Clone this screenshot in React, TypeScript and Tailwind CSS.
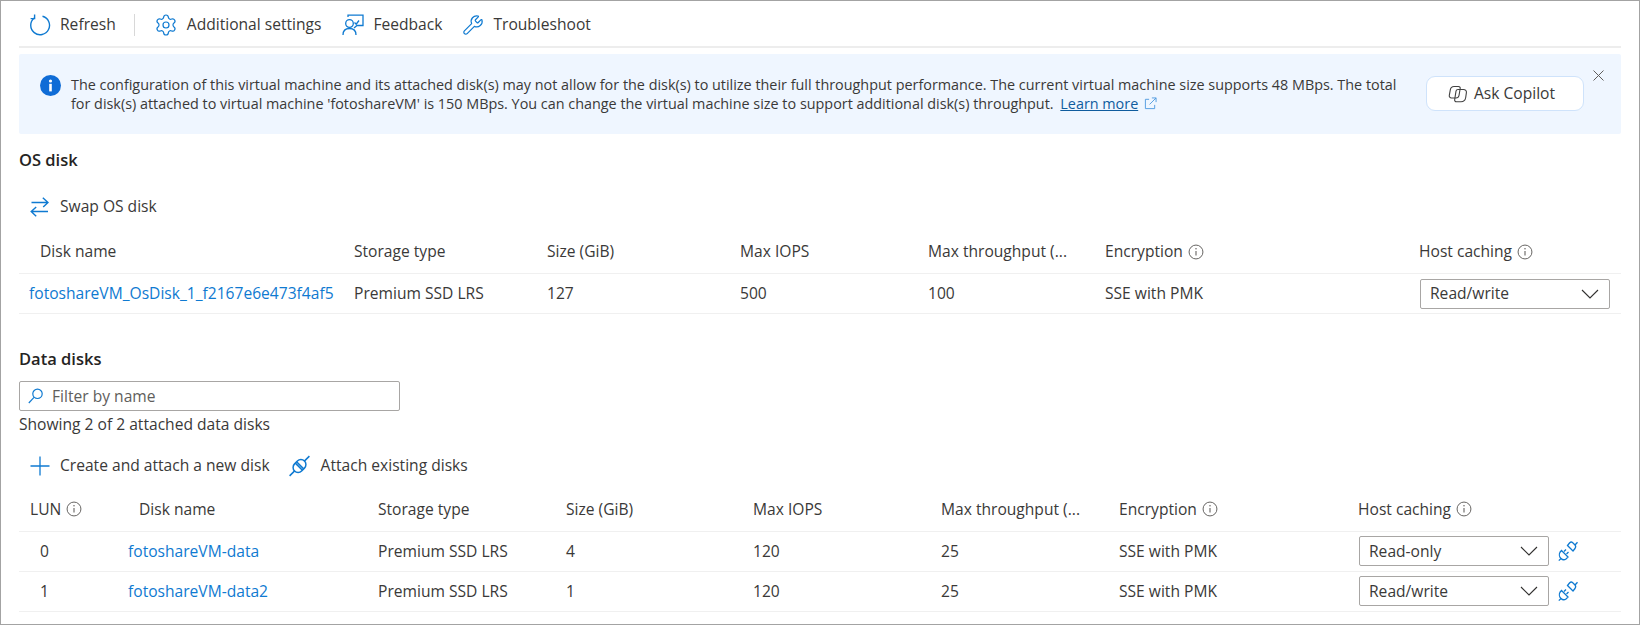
import React from 'react';
import { Settings, Wrench } from 'lucide-react';

const Info = () => (
  <svg width="16" height="16" viewBox="0 0 15 15" fill="none" stroke="#605e5c" className="shrink-0">
    <circle cx="7.5" cy="7.5" r="6.5" strokeWidth="0.9" />
    <path d="M7.5 6.6v4.2" strokeWidth="1" />
    <circle cx="7.5" cy="4.5" r="0.7" fill="#605e5c" stroke="none" />
  </svg>
);

const RefreshIcon = () => (
  <svg width="22" height="22" viewBox="0 0 22 22" fill="none" stroke="#0f7ad1" strokeWidth="1.4">
    <path d="M13.5 2.2A9.4 9.4 0 1 1 5.2 4" />
    <path d="M5.6 0.6V4.6H1.6" />
  </svg>
);

const FeedbackIcon = () => (
  <svg width="22" height="22" viewBox="0 0 22 22" fill="none" stroke="#0f7ad1" strokeWidth="1.3">
    <path d="M6 3V1.2H21V11.5H15L12 14" />
    <path d="M12.5 8.5L14.2 10.2L17 6.5" />
    <circle cx="7.5" cy="9.5" r="3.8" />
    <path d="M1 21C1 16.5 3.5 14.5 7.5 14.5S14 16.5 14 21" />
  </svg>
);

const SwapIcon = () => (
  <svg width="19" height="20" viewBox="0 0 19 20" fill="none" stroke="#0f7ad1" strokeWidth="1.4">
    <path d="M1.5 5.5H18M12.8 0.7L18 5.5L13.2 10" />
    <path d="M18 14.5H1.5M6.2 10L1.2 14.5L6.2 19.3" />
  </svg>
);

const PlusIcon = () => (
  <svg width="20" height="20" viewBox="0 0 20 20" fill="none" stroke="#0f7ad1" strokeWidth="1.3">
    <path d="M10 0.5V19.5M0.5 10H19.5" />
  </svg>
);

const PlugIcon = () => (
  <svg width="21" height="22" viewBox="0 0 21 22" fill="none" stroke="#0f7ad1" strokeWidth="1.5">
    <g transform="rotate(-45 10.5 11)">
      <path d="M-3.5 11H4M17 11H24.5" />
      <rect x="3.5" y="6" width="14" height="10" rx="5" />
      <path d="M9.6 6V16M11.4 6V16" />
    </g>
  </svg>
);

const DetachIcon = () => (
  <svg width="20" height="22" viewBox="0 0 20 22" fill="none" stroke="#0f7ad1" strokeWidth="1.3">
    <path d="M0.8 20.6L3 18.5" />
    <path d="M3.5 10.5L10 17L8 19C6.5 20 4.5 20 3 18.5C1.2 17 1 14 2 12.2Z" />
    <path d="M6 11.5L8 9.5M8.5 14L10.5 12" />
    <path d="M9.5 5.5L15 11L17 8.5C18 7 18 6 17 5L14.5 2.5C13.5 1.7 12.5 2 11.5 3Z" />
    <path d="M17 5L19.5 2.2" />
  </svg>
);

const ExternalIcon = () => (
  <svg width="13" height="13" viewBox="0 0 14 14" fill="none" stroke="#4f9be0" strokeWidth="1" className="ml-[6px] inline-block align-[-1px]">
    <path d="M5.5 2.5H1.5V12.5H11.5V8.5" />
    <path d="M6 8L13 1M8.5 1H13V5.5" />
  </svg>
);

const CopilotIcon = () => (
  <svg width="20" height="18" viewBox="0 0 20 18" fill="none" stroke="#424242" strokeWidth="1.1" className="shrink-0">
    <path d="M6 1.5H10.5C11.7 1.5 12.4 2.4 12.2 3.5L11 10.5C10.7 12 9.5 13 8 13H3.5C2 13 1 11.8 1.3 10.3L2.3 4.8C2.7 2.8 4 1.5 6 1.5Z" />
    <path d="M10 4.5H15.5C17.3 4.5 18.7 5.8 18.4 7.6L17.7 12.5C17.3 15 15.6 16.8 13 16.8H8.5C7.2 16.8 6.4 15.8 6.7 14.5L8 6.2C8.2 5.2 9 4.5 10 4.5Z" />
  </svg>
);

const Chevron = () => (
  <svg width="18" height="10" viewBox="0 0 18 10" fill="none" stroke="#323130" strokeWidth="1.1">
    <path d="M1 1L9 9L17 1" />
  </svg>
);

const Select = ({ value }: { value: string }) => (
  <div className="ml-[1px] flex h-[30px] w-[190px] items-center justify-between rounded-[2px] border border-[#a8a6a4] pl-[9px] pr-[10px]">
    <span>{value}</span>
    <Chevron />
  </div>
);

const ToolButton = ({ icon, label, className }: { icon: React.ReactNode; label: string; className?: string }) => (
  <div className={`flex items-center gap-[9px] ${className ?? ''}`}>
    {icon}
    <span>{label}</span>
  </div>
);

const osColumns = 'grid grid-cols-[335px_193px_193px_188px_177px_314px_201px] items-center';
const dataColumns = 'grid grid-cols-[109px_250px_188px_187px_188px_178px_239px_262px] items-center';

const dataDisks = [
  { lun: '0', name: 'fotoshareVM-data', size: '4', caching: 'Read-only' },
  { lun: '1', name: 'fotoshareVM-data2', size: '1', caching: 'Read/write' },
];

export default function App() {
  return (
    <div className="h-[625px] w-[1640px] overflow-hidden border border-[#a3a3a3] bg-white px-[18px] font-['Open_Sans',sans-serif] text-[15.6px] text-[#3a3938]">
      <div className="flex h-[47px] items-center border-b-2 border-[#ededed] pl-[10px] pt-[3px]">
        <ToolButton icon={<RefreshIcon />} label="Refresh" />
        <div className="ml-[18px] mr-[19px] h-[22px] w-[1px] bg-[#d8d8d8]" />
        <ToolButton icon={<Settings size={24} strokeWidth={1.2} color="#0f7ad1" />} label="Additional settings" />
        <ToolButton className="ml-[21px]" icon={<FeedbackIcon />} label="Feedback" />
        <ToolButton className="ml-[20px] gap-[8px]" icon={<Wrench size={22} strokeWidth={1.3} color="#0f7ad1" />} label="Troubleshoot" />
      </div>

      <div className="relative mt-[6px] flex h-[80px] rounded-[2px] bg-[#eff6ff] pl-[21px] pr-[35px] pt-[21px]">
        <svg width="21" height="21" viewBox="0 0 21 21" className="shrink-0">
          <circle cx="10.5" cy="10.5" r="10.5" fill="#0f6cd6" />
          <rect x="9.2" y="8.8" width="2.6" height="7.6" fill="white" />
          <circle cx="10.5" cy="6" r="1.6" fill="white" />
        </svg>
        <p className="ml-[10px] w-[1335px] shrink-0 text-[14.38px] leading-[19px]">
          The configuration of this virtual machine and its attached disk(s) may not allow for the disk(s) to utilize their full throughput performance. The current virtual machine size supports 48 MBps. The total for disk(s) attached to virtual machine 'fotoshareVM' is 150 MBps. You can change the virtual machine size to support additional disk(s) throughput.{' '}
          <a className="ml-[3px] text-[#0f5c9e] underline">Learn more</a>
          <ExternalIcon />
        </p>
        <div className="ml-[20px] mt-[1px] flex h-[35px] w-[158px] shrink-0 items-center justify-center gap-[6px] rounded-[9px] border border-[#cfe3fb] bg-white pr-[7px]">
          <CopilotIcon />
          <span>Ask Copilot</span>
        </div>
        <svg width="11" height="11" viewBox="0 0 11 11" stroke="#605e5c" strokeWidth="1" className="absolute right-[17px] top-[16px]">
          <path d="M0.5 0.5L10.5 10.5M10.5 0.5L0.5 10.5" />
        </svg>
      </div>

      <h2 className="mt-[15px] text-[16.5px] font-semibold leading-[22px] text-[#252423]">OS disk</h2>

      <div className="mt-[24px] pl-[11px]">
        <ToolButton className="gap-[11px]" icon={<SwapIcon />} label="Swap OS disk" />
      </div>

      <div className={`${osColumns} mt-[12px] h-[44px] border-b border-[#f0f0f0]`}>
        <span className="pl-[21px]">Disk name</span>
        <span>Storage type</span>
        <span>Size (GiB)</span>
        <span>Max IOPS</span>
        <span>Max throughput (...</span>
        <span className="flex items-center gap-[5px]">Encryption <Info /></span>
        <span className="flex items-center gap-[5px]">Host caching <Info /></span>
      </div>
      <div className={`${osColumns} h-[40px] border-b border-[#f0f0f0]`}>
        <a className="whitespace-nowrap pl-[10px] text-[#0f7ad1]">fotoshareVM_OsDisk_1_f2167e6e473f4af5</a>
        <span>Premium SSD LRS</span>
        <span>127</span>
        <span>500</span>
        <span>100</span>
        <span>SSE with PMK</span>
        <Select value="Read/write" />
      </div>

      <h2 className="mt-[34px] text-[16.5px] font-semibold leading-[22px] text-[#252423]">Data disks</h2>

      <div className="mt-[11px] flex h-[30px] w-[381px] items-center gap-[9px] rounded-[2px] border border-[#a8a6a4] pl-[8px]">
        <svg width="15" height="16" viewBox="0 0 15 16" fill="none" stroke="#0f7ad1" strokeWidth="1.2">
          <circle cx="9.5" cy="5.8" r="4.7" />
          <path d="M6 9.4L0.8 15" />
        </svg>
        <span className="text-[#5f5e5c]">Filter by name</span>
      </div>
      <p className="mt-[3px] leading-[20px]">Showing 2 of 2 attached data disks</p>

      <div className="mt-[20px] flex items-center pl-[11px]">
        <ToolButton className="gap-[10px]" icon={<PlusIcon />} label="Create and attach a new disk" />
        <ToolButton className="ml-[19px] gap-[11px]" icon={<PlugIcon />} label="Attach existing disks" />
      </div>

      <div className={`${dataColumns} mt-[10px] h-[44px] border-b border-[#f0f0f0]`}>
        <span className="flex items-center gap-[5px] pl-[11px]">LUN <Info /></span>
        <span className="pl-[11px]">Disk name</span>
        <span>Storage type</span>
        <span>Size (GiB)</span>
        <span>Max IOPS</span>
        <span>Max throughput (...</span>
        <span className="flex items-center gap-[5px]">Encryption <Info /></span>
        <span className="flex items-center gap-[5px]">Host caching <Info /></span>
      </div>
      {dataDisks.map((disk) => (
        <div key={disk.lun} className={`${dataColumns} h-[40px] border-b border-[#f0f0f0]`}>
          <span className="pl-[21px]">{disk.lun}</span>
          <a className="text-[#0f7ad1]">{disk.name}</a>
          <span>Premium SSD LRS</span>
          <span>{disk.size}</span>
          <span>120</span>
          <span>25</span>
          <span>SSE with PMK</span>
          <div className="flex items-center gap-[9px]">
            <Select value={disk.caching} />
            <DetachIcon />
          </div>
        </div>
      ))}
    </div>
  );
}
